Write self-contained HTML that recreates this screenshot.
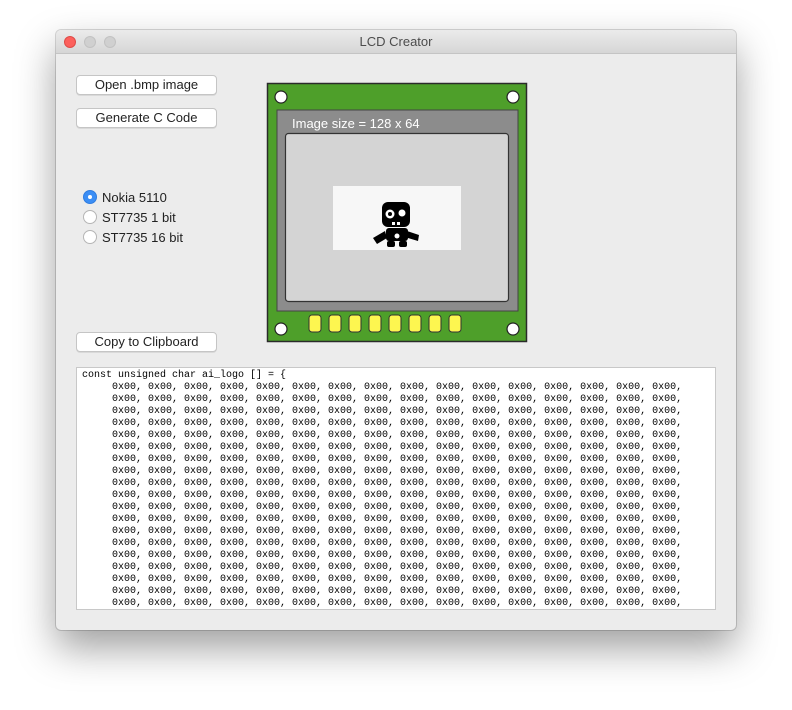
<!DOCTYPE html>
<html><head><meta charset="utf-8"><style>
body{margin:0;width:792px;height:710px;background:#fff;position:relative;font-family:"Liberation Sans",sans-serif;overflow:hidden}
.win{position:absolute;left:56px;top:30px;width:680px;height:600px;background:#ececec;border-radius:5px;box-shadow:0 18px 40px rgba(0,0,0,.38),0 0 0 1px rgba(0,0,0,.15)}
.tb{position:absolute;left:0;top:0;width:680px;height:23px;background:linear-gradient(#ebebeb,#d6d6d6);border-bottom:1px solid #c4c4c4;border-radius:5px 5px 0 0;text-align:center;font-size:13px;line-height:23px;color:#4c4c4c}
.dot{position:absolute;top:6px;width:12px;height:12px;border-radius:50%}
.btn{position:absolute;left:20px;width:139px;height:18px;background:#fff;border:1px solid #c5c5c5;border-radius:4px;box-shadow:0 1px 0 rgba(0,0,0,.08);font-size:13px;text-align:center;line-height:18px;color:#222}
.r{position:absolute;left:27px;font-size:13px;color:#222;height:18px;line-height:18px;padding-left:19px}
.r i{position:absolute;left:0;top:1px;width:14px;height:14px;border-radius:50%;background:#fff;border:1px solid #b5b5b5;box-sizing:border-box}
.r i.on{background:#3b8ef5;border-color:#2f7de0}
.r i.on:after{content:"";position:absolute;left:4px;top:4px;width:4px;height:4px;background:#fff;border-radius:50%}
.code{position:absolute;left:20px;top:337px;width:638px;height:241px;background:#fff;border:1px solid #c8c8c8;overflow:hidden}
pre{margin:0;position:absolute;left:5px;top:2px;font-family:"Liberation Mono",monospace;font-size:10px;line-height:12px;color:#000}
</style></head><body>
<div class="win">
<div class="tb">LCD Creator
<div class="dot" style="left:8px;background:#fc605c;border:1px solid #de4b47;box-sizing:border-box"></div>
<div class="dot" style="left:28px;background:#d0d0d0;border:1px solid #c2c2c2;box-sizing:border-box"></div>
<div class="dot" style="left:48px;background:#d0d0d0;border:1px solid #c2c2c2;box-sizing:border-box"></div>
</div>
<div class="btn" style="top:45px">Open .bmp image</div>
<div class="btn" style="top:78px">Generate C Code</div>
<div class="r" style="top:159px"><i class="on"></i>Nokia 5110</div>
<div class="r" style="top:179px"><i></i>ST7735 1 bit</div>
<div class="r" style="top:199px"><i></i>ST7735 16 bit</div>
<div class="btn" style="top:302px">Copy to Clipboard</div>
<div class="code"><pre>const unsigned char ai_logo [] = {
     0x00, 0x00, 0x00, 0x00, 0x00, 0x00, 0x00, 0x00, 0x00, 0x00, 0x00, 0x00, 0x00, 0x00, 0x00, 0x00,
     0x00, 0x00, 0x00, 0x00, 0x00, 0x00, 0x00, 0x00, 0x00, 0x00, 0x00, 0x00, 0x00, 0x00, 0x00, 0x00,
     0x00, 0x00, 0x00, 0x00, 0x00, 0x00, 0x00, 0x00, 0x00, 0x00, 0x00, 0x00, 0x00, 0x00, 0x00, 0x00,
     0x00, 0x00, 0x00, 0x00, 0x00, 0x00, 0x00, 0x00, 0x00, 0x00, 0x00, 0x00, 0x00, 0x00, 0x00, 0x00,
     0x00, 0x00, 0x00, 0x00, 0x00, 0x00, 0x00, 0x00, 0x00, 0x00, 0x00, 0x00, 0x00, 0x00, 0x00, 0x00,
     0x00, 0x00, 0x00, 0x00, 0x00, 0x00, 0x00, 0x00, 0x00, 0x00, 0x00, 0x00, 0x00, 0x00, 0x00, 0x00,
     0x00, 0x00, 0x00, 0x00, 0x00, 0x00, 0x00, 0x00, 0x00, 0x00, 0x00, 0x00, 0x00, 0x00, 0x00, 0x00,
     0x00, 0x00, 0x00, 0x00, 0x00, 0x00, 0x00, 0x00, 0x00, 0x00, 0x00, 0x00, 0x00, 0x00, 0x00, 0x00,
     0x00, 0x00, 0x00, 0x00, 0x00, 0x00, 0x00, 0x00, 0x00, 0x00, 0x00, 0x00, 0x00, 0x00, 0x00, 0x00,
     0x00, 0x00, 0x00, 0x00, 0x00, 0x00, 0x00, 0x00, 0x00, 0x00, 0x00, 0x00, 0x00, 0x00, 0x00, 0x00,
     0x00, 0x00, 0x00, 0x00, 0x00, 0x00, 0x00, 0x00, 0x00, 0x00, 0x00, 0x00, 0x00, 0x00, 0x00, 0x00,
     0x00, 0x00, 0x00, 0x00, 0x00, 0x00, 0x00, 0x00, 0x00, 0x00, 0x00, 0x00, 0x00, 0x00, 0x00, 0x00,
     0x00, 0x00, 0x00, 0x00, 0x00, 0x00, 0x00, 0x00, 0x00, 0x00, 0x00, 0x00, 0x00, 0x00, 0x00, 0x00,
     0x00, 0x00, 0x00, 0x00, 0x00, 0x00, 0x00, 0x00, 0x00, 0x00, 0x00, 0x00, 0x00, 0x00, 0x00, 0x00,
     0x00, 0x00, 0x00, 0x00, 0x00, 0x00, 0x00, 0x00, 0x00, 0x00, 0x00, 0x00, 0x00, 0x00, 0x00, 0x00,
     0x00, 0x00, 0x00, 0x00, 0x00, 0x00, 0x00, 0x00, 0x00, 0x00, 0x00, 0x00, 0x00, 0x00, 0x00, 0x00,
     0x00, 0x00, 0x00, 0x00, 0x00, 0x00, 0x00, 0x00, 0x00, 0x00, 0x00, 0x00, 0x00, 0x00, 0x00, 0x00,
     0x00, 0x00, 0x00, 0x00, 0x00, 0x00, 0x00, 0x00, 0x00, 0x00, 0x00, 0x00, 0x00, 0x00, 0x00, 0x00,
     0x00, 0x00, 0x00, 0x00, 0x00, 0x00, 0x00, 0x00, 0x00, 0x00, 0x00, 0x00, 0x00, 0x00, 0x00, 0x00,
     0x00, 0x00, 0x00, 0x00, 0x00, 0x00, 0x00, 0x00, 0x00, 0x00, 0x00, 0x00, 0x00, 0x00, 0x00, 0x00,</pre></div>
</div>
<svg style="position:absolute;left:0;top:0" width="792" height="710">
<rect x="267.5" y="83.5" width="259" height="258" fill="#4e9f2a" stroke="#2a2a2a" stroke-width="1.5"/>
<rect x="277" y="110" width="241" height="201" fill="#8c8c8c" stroke="#444" stroke-width="1"/>
<text x="292" y="128" font-family="Liberation Sans" font-size="13" fill="#fff">Image size = 128 x 64</text>
<rect x="285.5" y="133.5" width="223" height="168" rx="3" fill="#d4d4d4" stroke="#333" stroke-width="1.2"/>
<rect x="333" y="186" width="128" height="64" fill="#f7f7f7"/>
<g fill="#000">
<rect x="382" y="202" width="28" height="25" rx="6"/>
<rect x="386" y="228" width="22" height="13" rx="3"/>
<path d="M373 238 L385 231 L387 238 L377 244 Z"/>
<path d="M407 231 L419 235 L418 241 L408 238 Z"/>
<rect x="387" y="241" width="8" height="6" rx="2"/>
<rect x="399" y="241" width="8" height="6" rx="2"/>
</g>
<circle cx="390" cy="214" r="4.5" fill="#fff"/><circle cx="390" cy="214" r="2" fill="#000"/>
<circle cx="402" cy="213" r="3.5" fill="#fff"/>
<rect x="392" y="222" width="3" height="3" fill="#fff"/><rect x="397" y="222" width="3" height="3" fill="#fff"/>
<circle cx="397" cy="236" r="2.5" fill="#fff"/>
<g fill="#fff" stroke="#222" stroke-width="1.2">
<circle cx="281" cy="97" r="6"/><circle cx="513" cy="97" r="6"/>
<circle cx="281" cy="329" r="6"/><circle cx="513" cy="329" r="6"/>
</g>
<g fill="#fdf650" stroke="#333" stroke-width="1">
<rect x="309" y="315" width="12" height="17" rx="3"/><rect x="329" y="315" width="12" height="17" rx="3"/>
<rect x="349" y="315" width="12" height="17" rx="3"/><rect x="369" y="315" width="12" height="17" rx="3"/>
<rect x="389" y="315" width="12" height="17" rx="3"/><rect x="409" y="315" width="12" height="17" rx="3"/>
<rect x="429" y="315" width="12" height="17" rx="3"/><rect x="449" y="315" width="12" height="17" rx="3"/>
</g>
</svg>
</body></html>
